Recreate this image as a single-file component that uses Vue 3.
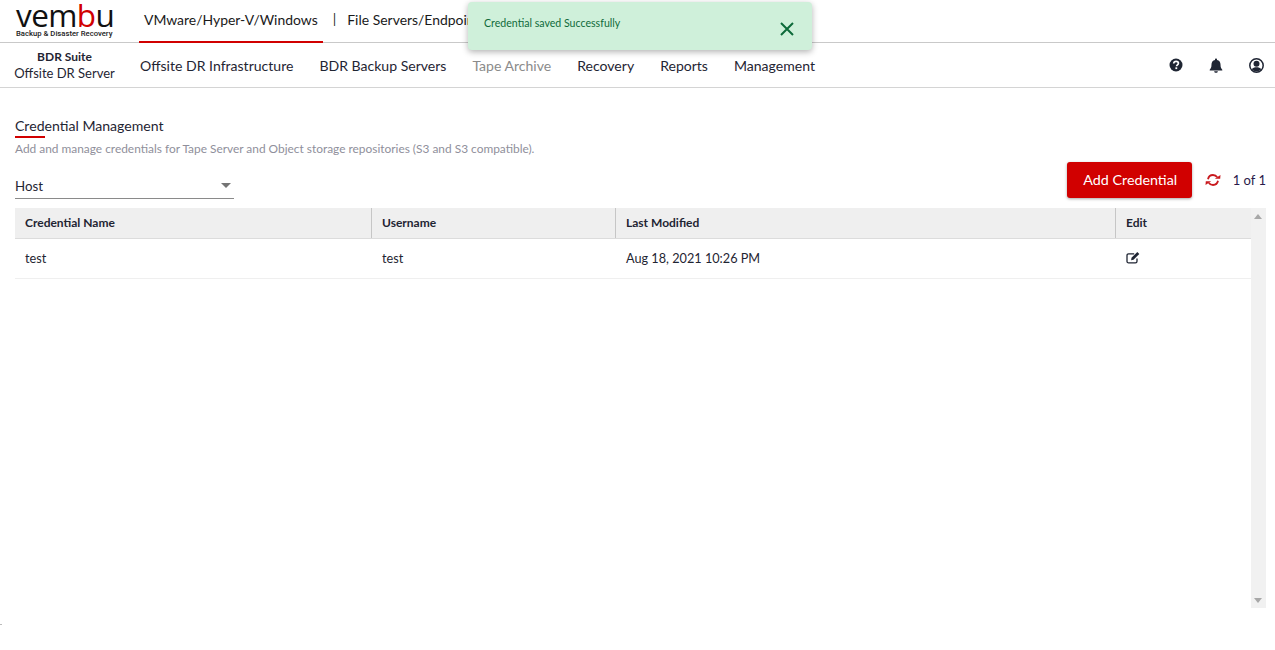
<script setup>
const links = [
  { label: 'Offsite DR Infrastructure' },
  { label: 'BDR Backup Servers' },
  { label: 'Tape Archive', muted: true },
  { label: 'Recovery' },
  { label: 'Reports' },
  { label: 'Management' }
]
const columns = ['Credential Name', 'Username', 'Last Modified', 'Edit']
const rows = [{ name: 'test', user: 'test', modified: 'Aug 18, 2021 10:26 PM' }]
</script>

<template>
  <div class="page">
    <header class="topbar">
      <div class="logo">
        <div class="wordmark">vem<span class="red">b</span>u</div>
        <div class="tagline">Backup &amp; Disaster Recovery</div>
      </div>
      <a class="tab active">VMware/Hyper-V/Windows</a>
      <span class="sep">|</span>
      <a class="tab second">File Servers/Endpoints</a>
    </header>

    <nav class="navbar">
      <div class="brand">
        <strong>BDR Suite</strong>
        <span>Offsite DR Server</span>
      </div>
      <ul class="links">
        <li v-for="l in links" :key="l.label" :class="{ muted: l.muted }">{{ l.label }}</li>
      </ul>
      <div class="nav-icons">
        <svg width="14" height="14" viewBox="0 0 14 14">
          <circle cx="7" cy="7" r="6.500" fill="#1f2533" />
          <path d="M4.700 5.500C4.800 4 6 3.300 7.100 3.300c1.300 0 2.300.8 2.300 1.900 0 1.700-1.800 1.600-1.800 3" fill="none" stroke="#fff" stroke-width="1.700" />
          <rect x="6.400" y="9.300" width="1.800" height="1.800" fill="#fff" />
        </svg>
        <svg width="14" height="15" viewBox="0 0 14 15">
          <path d="M7 0.500c.6 0 1 .4 1 1v.5c2.300.5 3.500 2.300 3.500 4.500 0 3 .7 4 1.800 5.200V12.500H.7v-.8C1.800 10.500 2.500 9.500 2.500 6.500 2.500 4.300 3.700 2.500 6 2v-.5c0-.6.4-1 1-1z" fill="#1f2533" />
          <path d="M5.200 13.200h3.600c0 1-.8 1.600-1.800 1.600s-1.800-.6-1.800-1.600z" fill="#1f2533" />
        </svg>
        <svg width="15" height="15" viewBox="0 0 15 15">
          <circle cx="7.500" cy="7.500" r="6.700" fill="none" stroke="#1f2533" stroke-width="1.500" />
          <circle cx="7.500" cy="5.800" r="3" fill="#1f2533" />
          <path d="M2.800 11.200C3.800 9.800 5.500 9.300 7.500 9.300s3.700.5 4.700 1.900c-1.100 1.400-2.800 2.200-4.700 2.200s-3.600-.8-4.700-2.200z" fill="#1f2533" />
        </svg>
      </div>
    </nav>

    <main class="content">
      <section class="title">
        <h1>Credential Management</h1>
        <p>Add and manage credentials for Tape Server and Object storage repositories (S3 and S3 compatible).</p>
      </section>

      <div class="toolbar">
        <div class="select">
          <span>Host</span>
          <i class="caret"></i>
        </div>
        <div class="actions">
          <button class="primary">Add Credential</button>
          <svg class="refresh" width="16" height="14" viewBox="0 0 16 14" fill="none">
            <path d="M3 6.200C3.500 3.700 5.500 2 8 2c1.800 0 3.300.9 4.200 2.300" stroke="#c9191e" stroke-width="1.800" />
            <path d="M13 7.800C12.500 10.300 10.500 12 8 12c-1.800 0-3.300-.9-4.200-2.300" stroke="#c9191e" stroke-width="1.800" />
            <path d="M9.800 5.800h5.400l.3-3.800zM6.200 8.200H.8L.5 12z" fill="#c9191e" />
          </svg>
          <span class="pager">1 of 1</span>
        </div>
      </div>

      <div class="table-wrap">
        <div class="table">
          <div class="row head">
            <div v-for="c in columns" :key="c" class="cell">{{ c }}</div>
          </div>
          <div v-for="r in rows" :key="r.name" class="row body">
            <div class="cell">{{ r.name }}</div>
            <div class="cell">{{ r.user }}</div>
            <div class="cell">{{ r.modified }}</div>
            <div class="cell">
              <svg width="15" height="13" viewBox="0 0 15 13" fill="none">
                <path d="M11 7.500v2.700c0 1-.6 1.600-1.600 1.600H2.600C1.600 11.800 1 11.200 1 10.200V4.400c0-1 .6-1.600 1.600-1.600h5.600" stroke="#1f2533" stroke-width="1.300" />
                <path d="M5.500 6.800 11.300 1l2 2-5.800 5.800-2.400.5z" fill="#1f2533" />
              </svg>
            </div>
          </div>
        </div>
        <div class="scrollbar">
          <i class="up"></i>
          <i class="down"></i>
        </div>
      </div>
    </main>

    <div class="toast">
      <span>Credential saved Successfully</span>
      <svg width="14" height="14" viewBox="0 0 14 14" fill="none">
        <path d="M1 1l12 12M13 1 1 13" stroke="#0d6b3a" stroke-width="2" />
      </svg>
    </div>
    <i class="edge-mark"></i>
  </div>
</template>

<style>
html, body { margin: 0; background: #fff; }
</style>

<style scoped>
.page {
  position: relative;
  width: 1275px;
  height: 650px;
  overflow: hidden;
  background: #fff;
  color: #1f2533;
  font-family: Lato, "Liberation Sans", sans-serif;
  font-size: 14px;
}
.edge-mark {
  position: absolute;
  left: 0;
  top: 624px;
  width: 2px;
  height: 1px;
  background: #bbb;
}
.topbar {
  box-sizing: border-box;
  display: flex;
  align-items: stretch;
  height: 43px;
  border-bottom: 1px solid #c9c9c9;
}
.logo {
  width: 139px;
  padding-left: 16px;
  box-sizing: border-box;
  display: flex;
  flex-direction: column;
}
.wordmark {
  font-family: "Open Sans", sans-serif;
  font-weight: 400;
  font-size: 31.500px;
  line-height: 30px;
  letter-spacing: -0.600px;
  color: #111;
  height: 29px;
  white-space: nowrap;
}
.red { color: #d10000; }
.tagline {
  font-family: Roboto, sans-serif;
  font-size: 7.700px;
  font-weight: 500;
  line-height: 9px;
  color: #222;
  white-space: nowrap;
}
.tab {
  display: flex;
  align-items: center;
  padding: 0 5px 5px;
  font-size: 13.950px;
  color: #1a1a1a;
  white-space: nowrap;
}
.tab.active {
  box-shadow: inset 0 -2px 0 #d10000;
  margin-bottom: -1px;
}
.sep {
  display: flex;
  align-items: center;
  padding-bottom: 5px;
  margin-left: 10px;
  color: #333;
}
.second { padding-left: 11px; padding-bottom: 4px; }
.navbar {
  box-sizing: border-box;
  display: flex;
  align-items: center;
  height: 45px;
  border-bottom: 1px solid #d4d4d4;
  padding: 0 11px 0 14px;
}
.brand {
  display: flex;
  flex-direction: column;
  align-items: center;
  width: 101px;
  line-height: 17px;
  white-space: nowrap;
  font-size: 13px;
}
.brand strong { font-size: 12px; font-weight: 700; }
.brand span { margin-top: 0; }
.links {
  list-style: none;
  display: flex;
  gap: 26px;
  margin: 0 0 0 25px;
  padding: 0;
  white-space: nowrap;
  font-size: 14.050px;
}
.links .muted { color: #8b8b8b; }
.nav-icons {
  margin-left: auto;
  display: flex;
  align-items: center;
  gap: 26px;
}
.content { padding: 0 9px 0 15px; }
.title { padding-top: 29px; }
.title h1 {
  margin: 0;
  font-size: 14.100px;
  font-weight: 400;
  line-height: 17px;
  position: relative;
  padding-bottom: 4px;
}
.title h1::after {
  content: "";
  position: absolute;
  left: 0;
  bottom: 0;
  width: 30px;
  height: 2px;
  background: #d10000;
}
.title p {
  margin: 3px 0 0;
  font-size: 11.900px;
  line-height: 15px;
  color: #8f8f9b;
}
.toolbar {
  display: flex;
  justify-content: space-between;
  align-items: flex-start;
  height: 47px;
  margin-top: 5px;
}
.select {
  box-sizing: border-box;
  width: 219px;
  height: 31px;
  margin-top: 7px;
  padding: 0 3px 4px 0;
  display: flex;
  align-items: flex-end;
  justify-content: space-between;
  border-bottom: 1px solid #8a8a8a;
  font-size: 13.300px;
}
.caret {
  border-left: 5.500px solid transparent;
  border-right: 5.500px solid transparent;
  border-top: 5.500px solid #757575;
  margin-bottom: 6px;
}
.actions {
  display: flex;
  align-items: center;
  height: 36px;
  margin-top: 1px;
}
.primary {
  width: 125px;
  height: 36px;
  padding: 0 0 2px 2px;
  border: 0;
  border-radius: 3px;
  background: #d10000;
  color: #fff;
  font-family: inherit;
  font-size: 14.300px;
  box-shadow: 0 1px 3px rgba(0, 0, 0, .35);
}
.refresh { margin-left: 13px; }
.pager { margin-left: 12px; font-size: 13px; color: #2a1a4a; white-space: nowrap; }
.table-wrap {
  display: flex;
  height: 400px;
}
.table { width: 1236px; }
.row {
  display: grid;
  grid-template-columns: 357px 244px 500px 135px;
}
.head {
  height: 31px;
  background: #efefef;
  border-bottom: 1px solid #dcdcdc;
  box-sizing: border-box;
  font-size: 12px;
  font-weight: 700;
}
.head .cell {
  box-sizing: border-box;
  display: flex;
  align-items: center;
  padding-left: 10px;
  padding-bottom: 2px;
  border-right: 1px solid #c6c6c6;
}
.head .cell:last-child { border-right: 0; }
.body {
  height: 40px;
  box-sizing: border-box;
  border-bottom: 1px solid #efefef;
  font-size: 12.700px;
}
.body .cell {
  display: flex;
  align-items: center;
  padding-left: 10px;
  padding-bottom: 2px;
}
.scrollbar {
  position: relative;
  flex: 0 0 15px;
  background: #f1f1f1;
}
.scrollbar i {
  position: absolute;
  left: 3px;
  border-left: 4px solid transparent;
  border-right: 4px solid transparent;
}
.scrollbar .up { top: 6px; border-bottom: 5px solid #a8a8a8; }
.scrollbar .down { bottom: 5px; border-top: 5px solid #a8a8a8; }
.toast {
  position: absolute;
  left: 468px;
  top: 2px;
  box-sizing: border-box;
  width: 344px;
  height: 48px;
  padding: 15px 18px 0 16px;
  display: flex;
  justify-content: space-between;
  align-items: flex-start;
  background: #cff0da;
  border-radius: 4px;
  box-shadow: 0 2px 6px rgba(0, 0, 0, .3);
  color: #0f6b3a;
  font-size: 10.600px;
  line-height: 13px;
}
.toast svg { margin-top: 5px; }
</style>
